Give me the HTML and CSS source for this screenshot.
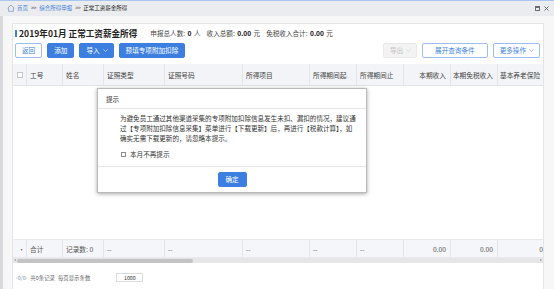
FILE: index.html
```html
<!DOCTYPE html>
<html lang="zh-CN">
<head>
<meta charset="utf-8">
<title>正常工资薪金所得</title>
<link rel="stylesheet" href="styles.css">
</head>
<body>
<div class="topline"></div>
<div class="crumbbar">
  <svg class="home" width="8" height="8" viewBox="0 0 8 8"><path d="M0.6 4.2 L4 1 L7.4 4.2 M1.6 3.4 V7.3 H6.4 V3.4" fill="none" stroke="#7f9bc4" stroke-width="0.8"/></svg>
  <span class="crumb">首页</span><span class="sep">&gt;&gt;</span><span class="crumb">综合所得申报</span><span class="sep">&gt;&gt;</span><span class="cur">正常工资薪金所得</span>
  <div class="winctl">
    <svg width="5" height="5" viewBox="0 0 5 5"><rect x="0.5" y="0.5" width="4" height="4" fill="none" stroke="#6d6d6d" stroke-width="1"/><rect x="0.5" y="0.5" width="4" height="1.5" fill="#6d6d6d"/></svg>
    <svg width="5" height="5" viewBox="0 0 5 5"><path d="M0.5 0.5 L4.5 4.5 M4.5 0.5 L0.5 4.5" stroke="#6d6d6d" stroke-width="1"/></svg>
  </div>
</div>
<div class="page">
  <div class="card">
    <div class="head">
      <span class="bar"></span>
      <span class="title">2019年01月 正常工资薪金所得</span>
      <div class="stats">
        <span class="stat">申报总人数: <b>0</b> 人</span>
        <span class="stat">收入总额: <b>0.00</b> 元</span>
        <span class="stat">免税收入合计: <b>0.00</b> 元</span>
      </div>
    </div>
    <div class="toolbar">
      <button class="btn outline">返回</button>
      <button class="btn primary">添加</button>
      <button class="btn primary drop">导入<svg class="chev" width="5" height="3" viewBox="0 0 5 3"><path d="M0.3 0.3 L2.5 2.5 L4.7 0.3" fill="none" stroke="#c9dcf8" stroke-width="0.7"/></svg></button>
      <button class="btn primary">预填专项附加扣除</button>
      <span class="spacer"></span>
      <button class="btn disabled drop">导出<svg class="chev" width="5" height="3" viewBox="0 0 5 3"><path d="M0.3 0.3 L2.5 2.5 L4.7 0.3" fill="none" stroke="#cfcfcf" stroke-width="0.7"/></svg></button>
      <button class="btn outline wide">展开查询条件</button>
      <button class="btn outline drop">更多操作<svg class="chev" width="5" height="3" viewBox="0 0 5 3"><path d="M0.3 0.3 L2.5 2.5 L4.7 0.3" fill="none" stroke="#8fb0e8" stroke-width="0.7"/></svg></button>
    </div>
    <div class="table">
      <div class="row thead">
        <div class="cell chk"><span class="box"></span></div>
        <div class="cell">工号</div>
        <div class="cell">姓名</div>
        <div class="cell">证照类型</div>
        <div class="cell">证照号码</div>
        <div class="cell">所得项目</div>
        <div class="cell">所得期间起</div>
        <div class="cell">所得期间止</div>
        <div class="cell num">本期收入</div>
        <div class="cell num">本期免税收入</div>
        <div class="cell last">基本养老保险</div>
      </div>
      <div class="tbody"></div>
      <div class="row tsum">
        <div class="cell chk dot">·</div>
        <div class="cell">合计</div>
        <div class="cell">记录数: 0</div>
        <div class="cell">--</div>
        <div class="cell">--</div>
        <div class="cell">--</div>
        <div class="cell">--</div>
        <div class="cell">--</div>
        <div class="cell num">0.00</div>
        <div class="cell num">0.00</div>
        <div class="cell last end">0</div>
      </div>
      <div class="hscroll">
        <span class="arr left"></span>
        <div class="track"><span class="thumb"></span></div>
        <span class="arr right"></span>
      </div>
    </div>
    <div class="pager">
      <span class="pg nav">‹0/0›</span>
      <span class="pg">共0条记录</span>
      <span class="pg">每页显示条数</span>
      <span class="size">1000</span>
    </div>
  </div>
</div>

<div class="dialog">
  <div class="dlg-title">提示</div>
  <div class="dlg-body">
    <p class="dlg-text">为避免员工通过其他渠道采集的专项附加扣除信息发生未扣、漏扣的情况，建议通过【专项附加扣除信息采集】菜单进行【下载更新】后，再进行【税款计算】，如确实无需下载更新的，请忽略本提示。</p>
    <label class="dlg-check"><span class="cbox"></span>本月不再提示</label>
  </div>
  <div class="dlg-foot">
    <button class="btn primary ok">确定</button>
  </div>
</div>
</body>
</html>
```

FILE: styles.css
```css
* { box-sizing: border-box; }
html, body {
  margin: 0;
  padding: 0;
  width: 554px;
  height: 289px;
  overflow: hidden;
  background: #f7f7f8;
  font-family: "Noto Sans CJK SC", "Noto Sans", sans-serif;
  color: #333;
}
.topline { height: 1px; background: #a9c7ee; }
.crumbbar {
  height: 15px;
  background: #ebecef;
  display: flex;
  align-items: center;
  padding-left: 7px;
  font-size: 5.5px;
  line-height: 1;
}
.home { margin-right: 2px; margin-top: -1px; }
.crumb { color: #3f7fd8; }
.sep { color: #666; margin: 0 3px; letter-spacing: -0.5px; }
.cur { color: #222; }
.winctl {
  margin-left: auto;
  display: flex;
  gap: 4px;
  padding-right: 5px;
  align-items: center;
}
.page {
  height: 273px;
  border-left: 3px solid #d9d9dc;
  padding: 7px 10px 0 9px;
}
.card {
  height: 100%;
  background: #fff;
  border: 1px solid #e4e5e8;
  border-bottom: none;
}
.head {
  height: 18px;
  display: flex;
  align-items: center;
  padding-left: 2px;
}
.bar {
  width: 2px;
  height: 7px;
  background: #3d7fe0;
}
.title {
  margin-left: 2px;
  font-size: 8.6px;
  font-weight: 700;
  color: #222;
}
.stats {
  margin-left: 13px;
  display: flex;
  gap: 6px;
  font-size: 6.6px;
  color: #444;
}
.stats b { color: #111; font-weight: 700; margin: 0 1px; }
.toolbar {
  margin-top: 1px;
  display: flex;
  align-items: center;
  gap: 5px;
  padding: 0 3px 0 2px;
}
.spacer { flex: 1; }
.btn {
  height: 15px;
  padding: 0 6px;
  border-radius: 2px;
  font-family: inherit;
  font-size: 6.6px;
  line-height: 1;
  display: inline-flex;
  align-items: center;
  gap: 3px;
  border: 1px solid transparent;
  cursor: pointer;
}
.btn.drop { padding: 0 5px 0 6px; }
.btn.primary { background: #3d7fe0; color: #fff; border-color: #3d7fe0; }
.btn.outline { background: #fff; color: #3d7fe0; border-color: #9dbcef; }
.btn.disabled { background: #f3f3f4; color: #c2c2c2; border-color: #e8e8ea; }
.btn.wide { padding: 0 12px; }
.table { margin-top: 6px; }
.row {
  display: grid;
  grid-template-columns: 14px 36px 41px 61px 78px 67px 47px 47px 47px 47px 45px;
}
.cell {
  border-right: 1px solid #e3e5ea;
  padding: 0 3px;
  display: flex;
  align-items: center;
  white-space: nowrap;
  overflow: hidden;
  font-size: 6.7px;
  color: #444;
}
.cell.num { justify-content: flex-end; padding-right: 4px; }
.cell.last { border-right: none; padding-left: 2px; }
.cell.end { justify-content: flex-end; padding-right: 0; }
.cell.chk { justify-content: center; padding: 0; }
.thead {
  height: 22px;
  background: #f3f4f7;
  border-bottom: 1px solid #e3e5ea;
}
.box {
  width: 6px;
  height: 6px;
  border: 1px solid #c6c6c6;
  background: #fff;
}
.tbody { height: 153px; background: #fff; }
.tsum {
  height: 19px;
  background: #f5f6f9;
  border-top: 1px solid #e8e9ed;
  border-bottom: 1px solid #e8e9ed;
}
.tsum .cell { color: #555; }
.cell.dot { justify-content: flex-end; padding-right: 1px; }
.hscroll {
  height: 5px;
  display: flex;
  align-items: center;
  background: #e6e6e6;
}
.arr { width: 4px; height: 5px; position: relative; }
.arr.left::before, .arr.right::before {
  content: "";
  position: absolute;
  top: 1px;
  border-top: 1.5px solid transparent;
  border-bottom: 1.5px solid transparent;
}
.arr.left::before { left: 1px; border-right: 2px solid #a0a0a0; }
.arr.right::before { right: 1px; border-left: 2px solid #a0a0a0; }
.track { flex: 1; height: 4px; position: relative; }
.thumb {
  position: absolute;
  left: 0;
  top: 0;
  width: 176px;
  height: 4px;
  border-radius: 2px;
  background: #c3c3c3;
}
.pager {
  margin-top: 10px;
  padding-left: 3px;
  display: flex;
  align-items: center;
  gap: 3px;
  font-size: 5.4px;
  color: #666;
}
.pg.nav { color: #8a9cb8; }
.size {
  margin-left: 23px;
  width: 27px;
  height: 9px;
  border: 1px solid #dcdcdc;
  display: flex;
  align-items: center;
  justify-content: center;
  color: #333;
  font-size: 5.2px;
}
.dialog {
  position: absolute;
  left: 97px;
  top: 88px;
  width: 270px;
  height: 105px;
  background: #fff;
  border: 1px solid #b9b9b9;
  box-shadow: 0 1px 4px rgba(0, 0, 0, 0.35);
  display: flex;
  flex-direction: column;
}
.dlg-title {
  height: 20px;
  border-bottom: 1px solid #e6e6e6;
  display: flex;
  align-items: center;
  padding-left: 8px;
  font-size: 6.6px;
  color: #333;
}
.dlg-body {
  height: 58px;
  padding: 4px 0 0 22px;
  border-bottom: 1px solid #e6e6e6;
}
.dlg-text {
  margin: 0;
  width: 238px;
  font-size: 6.55px;
  line-height: 10px;
  color: #333;
}
.dlg-check {
  margin-top: 6px;
  height: 10px;
  display: flex;
  align-items: center;
  gap: 4px;
  font-size: 6.6px;
  color: #333;
}
.cbox {
  width: 5px;
  height: 5px;
  border: 1px solid #8c8c8c;
  margin-left: 1px;
}
.dlg-foot {
  flex: 1;
  display: flex;
  align-items: center;
  justify-content: center;
}
.btn.ok { width: 29px; padding: 0; justify-content: center; }
```
